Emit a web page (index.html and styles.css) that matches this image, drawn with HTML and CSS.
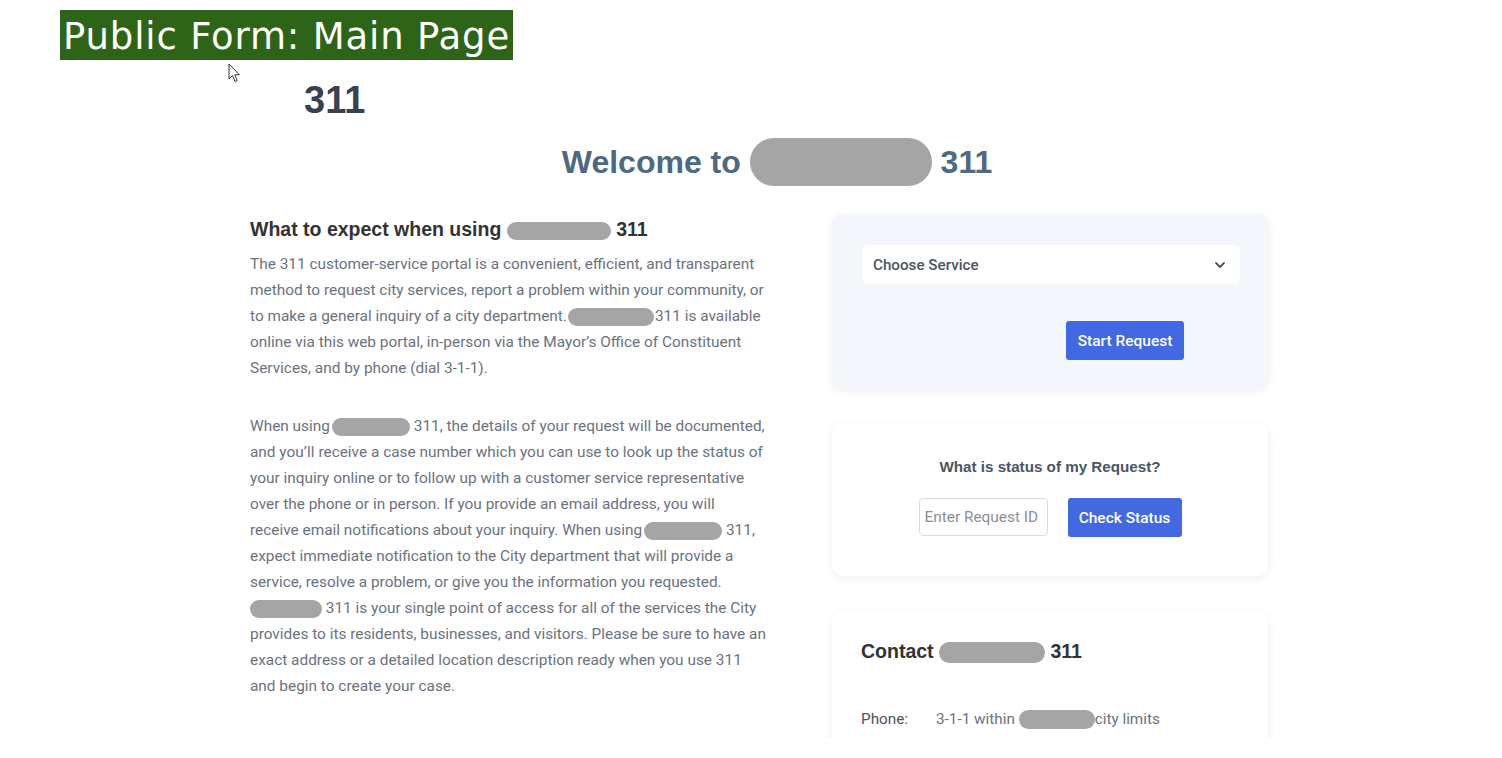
FILE: index.html
```html
<!DOCTYPE html>
<html lang="en">
<head>
  <meta charset="UTF-8" />
  <title>Public Form: Main Page</title>
  <link rel="stylesheet" href="styles.css">
</head>
<body>
  <div class="caption">Public Form: Main Page</div>
  <svg class="pointer" width="13" height="21" viewBox="0 0 13 21">
    <path d="M1 1 L1 16 L4.5 12.5 L7 18.5 L9.2 17.6 L6.8 11.8 L11.5 11.8 Z" fill="#fff" stroke="#333" stroke-width="1" stroke-linejoin="round"/>
  </svg>

  <div class="page">
    <div class="wrap">
      <div class="brand">311</div>
      <h1 class="welcome">Welcome to <span class="redact redact-xl"></span> 311</h1>

      <div class="columns">
        <section class="about">
          <h2>What to expect when using <span class="redact redact-h2"></span> 311</h2>
          <p>The 311 customer-service portal is a convenient, efficient, and transparent<br>
            method to request city services, report a problem within your community, or<br>
            to make a general inquiry of a city department.<span class="redact redact-a"></span>311 is available<br>
            online via this web portal, in-person via the Mayor’s Office of Constituent<br>
            Services, and by phone (dial 3-1-1).</p>
          <p>When using<span class="redact redact-b"></span> 311, the details of your request will be documented,<br>
            and you’ll receive a case number which you can use to look up the status of<br>
            your inquiry online or to follow up with a customer service representative<br>
            over the phone or in person. If you provide an email address, you will<br>
            receive email notifications about your inquiry. When using<span class="redact redact-c"></span> 311,<br>
            expect immediate notification to the City department that will provide a<br>
            service, resolve a problem, or give you the information you requested.<br>
            <span class="redact redact-d"></span> 311 is your single point of access for all of the services the City<br>
            provides to its residents, businesses, and visitors. Please be sure to have an<br>
            exact address or a detailed location description ready when you use 311<br>
            and begin to create your case.</p>
        </section>

        <aside class="side">
          <div class="card card-service">
            <div class="select">
              <span>Choose Service</span>
              <svg width="12" height="8" viewBox="0 0 12 8"><path d="M2 2 L6 6 L10 2" fill="none" stroke="#4b5563" stroke-width="1.8" stroke-linecap="round" stroke-linejoin="round"/></svg>
            </div>
            <button class="btn btn-start">Start Request</button>
          </div>

          <div class="card card-status">
            <h3>What is status of my Request?</h3>
            <div class="status-row">
              <input type="text" placeholder="Enter Request ID">
              <button class="btn">Check Status</button>
            </div>
          </div>

          <div class="card card-contact">
            <h2>Contact <span class="redact redact-e"></span> 311</h2>
            <div class="contact-row">
              <span class="label">Phone:</span>
              <span>3-1-1 within <span class="redact redact-f"></span>city limits</span>
            </div>
          </div>
        </aside>
      </div>
    </div>
  </div>
</body>
</html>
```

FILE: styles.css
```css
body {
  margin: 0;
  background: #fff;
  font-family: Roboto, "Liberation Sans", Arial, sans-serif;
}
.caption {
  display: inline-block;
  margin: 10px 0 0 60px;
  height: 50px;
  line-height: 54px;
  padding: 0 3px;
  background: #2d6418;
  color: #fff;
  font-family: "DejaVu Sans", Verdana, sans-serif;
  font-size: 37px;
  letter-spacing: 0.85px;
  vertical-align: top;
}
.pointer {
  position: absolute;
  left: 228px;
  top: 63px;
}
.page {
  height: 678px;
  overflow: hidden;
}
.wrap {
  margin-left: 250px;
  width: 1054px;
}
.brand {
  margin: 18px 0 0 54px;
  font-family: "Liberation Sans", Arial, sans-serif;
  font-weight: bold;
  font-size: 38px;
  line-height: 44px;
  color: #374151;
}
.welcome {
  margin: 16px 0 0;
  text-align: center;
  font-family: "Liberation Sans", Arial, sans-serif;
  font-size: 32px;
  line-height: 48px;
  color: #4d6983;
}
.redact {
  display: inline-block;
  background: #a5a5a5;
  border-radius: 999px;
  vertical-align: middle;
  filter: blur(0.6px);
}
.redact-xl { width: 182px; height: 48px; border-radius: 24px; margin-top: -6px; }
.redact-h2 { width: 104px; height: 18px; }
.redact-a { width: 86px; height: 18px; margin: 0 1px; }
.redact-b { width: 78px; height: 18px; margin-left: 2px; }
.redact-c { width: 78px; height: 18px; margin-left: 2px; }
.redact-d { width: 72px; height: 18px; }
.redact-e { width: 106px; height: 21px; }
.redact-f { width: 76px; height: 19px; }

.columns {
  display: flex;
  gap: 52px;
  margin-top: 28px;
}
.about {
  width: 530px;
  white-space: nowrap;
}
.about h2 {
  margin: 1px 0 8px;
  font-family: "Liberation Sans", Arial, sans-serif;
  font-size: 19.5px;
  line-height: 28px;
  color: #333;
}
.about p {
  margin: 0 0 32px;
  font-size: 15.4px;
  line-height: 26px;
  color: #6b7280;
}

.side {
  width: 436px;
  display: flex;
  flex-direction: column;
  gap: 35px;
}
.card {
  background: #fff;
  border-radius: 10px;
  box-shadow: 0 2px 10px rgba(0, 0, 0, 0.07);
}
.card-service {
  background: #f3f6fa;
  padding: 31px 28px 29px 30px;
}
.select {
  display: flex;
  justify-content: space-between;
  align-items: center;
  height: 39px;
  padding: 0 14px 0 11px;
  background: #fff;
  border-radius: 6px;
  font-size: 15.2px;
  font-weight: 500;
  color: #4b5563;
}
.btn {
  height: 39px;
  padding: 0 10px;
  border: none;
  border-radius: 3px;
  background: #4169e1;
  color: #fff;
  font-family: Roboto, sans-serif;
  font-size: 15.5px;
  font-weight: 500;
  cursor: pointer;
}
.btn-start {
  margin: 37px 0 0 204px;
  width: 118px;
}
.card-status {
  padding: 33px 0 39px;
  text-align: center;
}
.card-status h3 {
  margin: 0 0 21px;
  font-family: "Liberation Sans", Arial, sans-serif;
  font-size: 15.2px;
  line-height: 20px;
  color: #4b5563;
}
.status-row {
  display: flex;
  justify-content: center;
  gap: 20px;
}
.status-row input {
  box-sizing: border-box;
  width: 129px;
  height: 38px;
  padding: 0 5px;
  border: 1px solid #d9dde3;
  border-radius: 4px;
  font-family: Roboto, sans-serif;
  font-size: 15.4px;
}
.status-row input::placeholder {
  color: #8a8f98;
}
.status-row .btn {
  width: 114px;
}
.card-contact {
  padding: 26px 29px 40px;
}
.card-contact h2 {
  margin: 0 0 44px;
  font-family: "Liberation Sans", Arial, sans-serif;
  font-size: 19.5px;
  line-height: 28px;
  color: #333;
}
.contact-row {
  display: flex;
  font-size: 15.3px;
  line-height: 20px;
  color: #6b7280;
}
.contact-row .label {
  width: 75px;
  color: #4b5563;
}
```
